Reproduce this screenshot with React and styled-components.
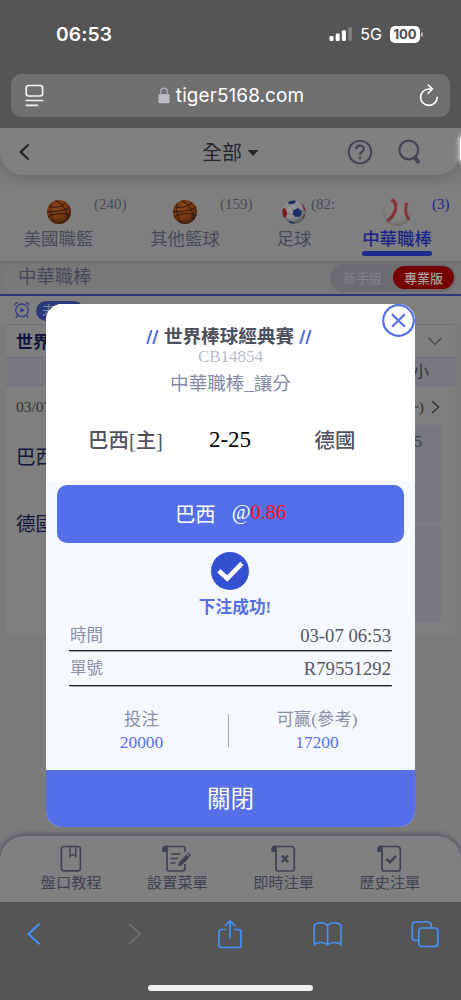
import React from "react";
import styled, { createGlobalStyle } from "styled-components";

const GlobalStyle = createGlobalStyle`
  * {
    box-sizing: border-box;
  }
  body {
    margin: 0;
    background: #555555;
    font-family: "Liberation Serif", "Noto Sans CJK TC", serif;
  }
`;

const Phone = styled.div`
  position: relative;
  width: 461px;
  height: 1000px;
  display: flex;
  flex-direction: column;
  overflow: hidden;
  background: #555555;
`;

/* ---------- browser top ---------- */

const StatusBar = styled.div`
  height: 74px;
  padding: 0 38px 6px 56px;
  display: flex;
  align-items: center;
  justify-content: space-between;
  color: #ffffff;
  font-family: Inter, sans-serif;
`;

const Clock = styled.div`
  font-size: 19.3px;
  font-weight: 600;
  letter-spacing: 0.1px;
`;

const StatusIcons = styled.div`
  display: flex;
  align-items: center;
  font-size: 16px;
`;

const Network = styled.span`
  margin: 0 8px 0 7px;
  font-size: 16px;
`;

const Battery = styled.div`
  width: 30px;
  height: 17px;
  border-radius: 5px;
  background: #ffffff;
  color: #4a4a4a;
  font-size: 13px;
  font-weight: 700;
  line-height: 17px;
  text-align: center;
`;

const BatteryTip = styled.div`
  width: 2px;
  height: 5px;
  margin-left: 1px;
  border-radius: 0 2px 2px 0;
  background: #b5b5b5;
`;

const AddressBar = styled.div`
  height: 43px;
  margin: 0 11px;
  padding: 0 11px 0 14px;
  display: flex;
  align-items: center;
  justify-content: space-between;
  border-radius: 10px;
  background: #707070;
  color: #ffffff;
  font-family: Inter, sans-serif;
  font-size: 18.9px;
`;

const Address = styled.div`
  display: flex;
  align-items: center;
  gap: 6px;
  padding-right: 1px;
  letter-spacing: 0.12px;
`;

/* ---------- page ---------- */

const Page = styled.div`
  position: relative;
  height: 774px;
  margin-top: 11px;
  display: flex;
  flex-direction: column;
  background: #7b7b7b;
  overflow: hidden;
`;

const Header = styled.div`
  height: 47px;
  padding: 0 40px 0 17px;
  display: grid;
  grid-template-columns: 100px 1fr 100px;
  align-items: center;
  border-radius: 0 0 24px 24px;
  background: #808080;
  box-shadow: 0 3px 8px rgba(60, 60, 60, 0.25);
`;

const HeaderTitle = styled.div`
  display: flex;
  align-items: center;
  justify-content: center;
  gap: 5px;
  padding: 2px 0 0 23px;
  color: #26272c;
  font-size: 20px;
  line-height: 24px;
`;

const HeaderTools = styled.div`
  display: flex;
  justify-content: flex-end;
  gap: 24px;
`;

const Glow = styled.div`
  position: absolute;
  top: 7px;
  right: -9px;
  width: 10px;
  height: 28px;
  border-radius: 5px;
  background: #ffffff;
  box-shadow: 0 0 5px 1px #d8d8d8;
`;

const Tabs = styled.div`
  height: 76px;
  margin-top: 10px;
  display: grid;
  grid-template-columns: 117px 136px 82px 124px;
  background: #7f7f7f;
`;

const Tab = styled.div`
  position: relative;
  display: flex;
  flex-direction: column;
  align-items: center;
  padding-top: 12px;
  color: ${(props) => (props.$active ? "#19258a" : "#474b58")};
  font-size: 17.4px;
  font-weight: ${(props) => (props.$active ? 500 : 400)};
`;

const Ball = styled.div`
  height: 30px;
  display: flex;
  align-items: center;
`;

const TabLabel = styled.div`
  height: 26px;
  line-height: 24px;
  white-space: nowrap;
`;

const Underline = styled.div`
  width: 70px;
  height: 5px;
  margin-top: -2px;
  border-radius: 3px;
  background: #1c2b8c;
`;

const Count = styled.div`
  position: absolute;
  top: 10px;
  left: ${(props) => props.$left}px;
  white-space: nowrap;
  font-size: 15px;
  line-height: 19px;
  font-weight: 400;
`;

const LeagueBar = styled.div`
  height: 35px;
  padding: 0 5px 0 18px;
  display: flex;
  align-items: center;
  justify-content: space-between;
  border-bottom: 2px solid #2c3777;
  background: #797979;
  box-shadow: inset 0 3px 4px -2px rgba(60, 60, 60, 0.3);
  color: #44485a;
  font-size: 18.4px;
  line-height: 24px;
`;

const LeagueName = styled.div`
  padding-bottom: 1px;
`;

const Switcher = styled.div`
  width: 126px;
  height: 28px;
  padding: 2px;
  display: flex;
  align-items: center;
  justify-content: space-between;
  border-radius: 14px;
  background: #6b6c6f;
`;

const SwitchItem = styled.div`
  width: 61px;
  height: 23px;
  padding-top: 2px;
  border-radius: 12px;
  background: ${(props) => (props.$on ? "#760000" : "transparent")};
  color: ${(props) => (props.$on ? "#a5a0a0" : "#838488")};
  font-size: 13px;
  font-weight: ${(props) => (props.$on ? 500 : 400)};
  line-height: 22px;
  text-align: center;
`;

const LiveRow = styled.div`
  height: 28px;
  padding: 5px 14px 3px;
  display: flex;
  gap: 6px;
  background: #7f7f7f;
`;

const LivePill = styled.div`
  width: 48px;
  height: 20px;
  padding-left: 6px;
  border-radius: 10px;
  background: #2b3877;
  color: #8288a3;
  font-size: 13px;
  line-height: 20px;
`;

const Board = styled.div`
  width: 449px;
  height: 310px;
  margin-left: 6px;
  background: #7f7f7f;
`;

const BoardTitle = styled.div`
  height: 34px;
  padding: 0 13px 0 10px;
  display: flex;
  align-items: center;
  justify-content: space-between;
  border-top: 1px solid #6f7080;
  border-bottom: 1px solid #6f7080;
  color: #10153d;
  font-size: 16.8px;
  font-weight: 700;
`;

const BoardBand = styled.div`
  height: 28px;
  padding: 0 26px;
  border-bottom: 1px solid #6f7080;
  background: #78797f;
  color: #2f3036;
  font-size: 16px;
  line-height: 28px;
  text-align: right;
`;

const BoardTime = styled.div`
  height: 39px;
  padding: 3px 15px 0 10px;
  display: flex;
  align-items: center;
  justify-content: space-between;
  color: #303036;
  font-size: 15.5px;
`;

const MoreLink = styled.div`
  display: flex;
  align-items: center;
  gap: 7px;
`;

const BoardBody = styled.div`
  display: flex;
  justify-content: space-between;
  padding: 0 14px 0 10px;
`;

const TeamNames = styled.div`
  display: flex;
  flex-direction: column;
  gap: 37px;
  padding-top: 18px;
  color: #10153d;
  font-size: 19.5px;
  line-height: 30px;
`;

const OddsColumn = styled.div`
  width: 60px;
  display: flex;
  flex-direction: column;
  gap: 3px;
`;

const OddsCell = styled.div`
  height: 97px;
  padding: 6px 19px;
  background: #78797f;
  color: #393a42;
  font-size: 16px;
  line-height: 22px;
  text-align: right;
`;

const BottomNav = styled.div`
  height: 66px;
  margin-top: auto;
  padding: 9px 18px 0;
  display: grid;
  grid-template-columns: repeat(4, 1fr);
  border-radius: 24px 24px 0 0;
  background: #808080;
  box-shadow: 0 -1px 5px 1px #565765;
`;

const NavItem = styled.div`
  display: flex;
  flex-direction: column;
  align-items: center;
  color: #3e4252;
  font-size: 15.2px;
  line-height: 20px;
`;

/* ---------- bet slip ---------- */

const Slip = styled.div`
  position: absolute;
  top: 304px;
  left: 46px;
  width: 369px;
  height: 523px;
  display: flex;
  flex-direction: column;
  border-radius: 16px;
  background: #f5f8ff;
  text-align: center;
  overflow: hidden;
`;

const SlipHead = styled.div`
  height: 177px;
  padding-top: 20px;
  background: #ffffff;
`;

const SlipTitle = styled.div`
  height: 26px;
  padding-right: 3px;
  display: flex;
  align-items: center;
  justify-content: center;
  gap: 5px;
  color: #4d505d;
  font-size: 18.6px;
  font-weight: 700;
  line-height: 26px;
`;

const SlipCode = styled.div`
  height: 18px;
  margin-top: -2px;
  color: #b9bcca;
  font-size: 17px;
  line-height: 18px;
`;

const SlipMarket = styled.div`
  height: 26px;
  margin-top: 5px;
  color: #858ba6;
  font-size: 18.6px;
  line-height: 26px;
`;

const Match = styled.div`
  height: 40px;
  margin-top: 22px;
  display: grid;
  grid-template-columns: 159px 50px 160px;
  align-items: center;
  color: #50535e;
  font-size: 20.4px;
  font-weight: 500;
`;

const Score = styled.div`
  padding-top: 2px;
  color: #000000;
  font-size: 23px;
  font-weight: 400;
`;

const Pick = styled.div`
  height: 58px;
  margin: 4px 11px 0;
  padding-bottom: 3px;
  display: flex;
  align-items: center;
  justify-content: center;
  gap: 16px;
  border-radius: 10px;
  background: #556fe8;
  color: #ffffff;
  font-size: 20.4px;
`;

const Odds = styled.span`
  color: #ff0d12;
`;

const Success = styled.div`
  height: 77px;
  padding: 9px 1px 0 0;
  display: flex;
  flex-direction: column;
  align-items: center;
  color: #556fe8;
  font-size: 16.7px;
  font-weight: 700;
`;

const SuccessText = styled.div`
  margin-top: 6px;
  padding-left: 10px;
  line-height: 24px;
`;

const Detail = styled.div`
  height: ${(props) => props.$height}px;
  margin: 0 23px;
  padding: 1px 1px 0 1px;
  display: flex;
  align-items: center;
  justify-content: space-between;
  border-bottom: 1px solid #232429;
  box-shadow: 0 1px 0 -0.5px #555555;
  color: #8a8fa5;
  font-size: 16.5px;
  line-height: 28px;
`;

const DetailValue = styled.span`
  padding-top: 1px;
  color: #555763;
  font-size: 18.7px;
`;

const Amounts = styled.div`
  height: 84px;
  display: grid;
  grid-template-columns: 173px 1px 1fr;
  padding: 20px 10px 0 9px;
`;

const Divider = styled.div`
  width: 1px;
  height: 33px;
  margin-top: 8px;
  background: #a4a8ce;
`;

const Amount = styled.div`
  color: #8a8fa5;
  font-size: 17.4px;
  line-height: 26px;
`;

const AmountValue = styled.div`
  color: #556fe8;
  line-height: 21px;
`;

const CloseButton = styled.button`
  height: 57px;
  margin-top: auto;
  padding: 0 0 3px;
  border: 0;
  background: #556fe8;
  color: #ffffff;
  font-family: inherit;
  font-size: 23.5px;
`;

const CloseIcon = styled.svg`
  position: absolute;
  top: 304px;
  left: 382px;
`;

/* ---------- browser bottom ---------- */

const SafariBar = styled.div`
  height: 64px;
  padding: 0 21px 0 19px;
  display: flex;
  align-items: center;
  justify-content: space-between;
`;

const HomeBar = styled.div`
  width: 165px;
  height: 6px;
  margin: 19px auto 0;
  border-radius: 3px;
  background: #f0f0f0;
`;

function Basketball() {
  return (
    <svg width="26" height="26" viewBox="0 0 26 26" fill="none">
      <defs>
        <radialGradient id="orange" cx="0.42" cy="0.35" r="0.65">
          <stop offset="0" stopColor="#8a451c" />
          <stop offset="0.65" stopColor="#743610" />
          <stop offset="1" stopColor="#42200e" />
        </radialGradient>
      </defs>
      <circle cx="13" cy="13" r="12" fill="url(#orange)" />
      <path
        d="M3.2 7.5C8 9.5 16 8 20 3.5M1 12.5C9 13 18 12 24 8M2 18C9 13.5 19 14 24.5 16.5M9.5 1.5C17 5 21.5 12 21.5 21"
        stroke="#24150e"
        strokeWidth="0.9"
      />
      <path d="M5 4.2C3.8 10 5.5 19 9 24.2" stroke="#2c180e" strokeWidth="0.7" />
    </svg>
  );
}

function SoccerBall() {
  return (
    <svg width="24" height="24" viewBox="0 0 24 24">
      <defs>
        <clipPath id="soccer">
          <circle cx="12" cy="12" r="11.5" />
        </clipPath>
        <radialGradient id="shell" cx="0.42" cy="0.38" r="0.62">
          <stop offset="0" stopColor="#9a9a9c" />
          <stop offset="0.6" stopColor="#8a8a8d" />
          <stop offset="1" stopColor="#545458" />
        </radialGradient>
      </defs>
      <g clipPath="url(#soccer)">
        <circle cx="12" cy="12" r="12" fill="url(#shell)" />
        <path d="M5.5 2.5L8 0H14L12.8 3.4L8 4.2Z" fill="#1a2f60" />
        <path d="M0 8L3.5 8.5L5.2 13.5L3.6 17.5L0 17Z" fill="#82151b" />
        <path d="M19.5 2.5L24 6L24 12L22 9.5Z" fill="#82151b" />
        <path d="M11 10.5L16 8L20 11.5L18.5 16.5L13.5 17L11 14.5Z" fill="#1a2f6a" />
        <path d="M7 21L11 22L13 24H7Z" fill="#1a2f60" />
        <path d="M20.5 19L22 15L24 15L22 21Z" fill="#82151b" />
        <path
          d="M8 4.2L4 8.5M12.8 3.4L16 8M5.2 13.5L11 14.5M13.5 17L11 22M18.5 16.5L20.5 19M3.6 17.5L7 21M20 11.5L22 9.5M8 4.2L11 10.5"
          stroke="#6a6a70"
          strokeWidth="0.6"
          fill="none"
        />
      </g>
    </svg>
  );
}

function Baseball() {
  return (
    <svg width="28" height="28" viewBox="0 0 28 28" fill="none">
      <defs>
        <radialGradient id="leather" cx="0.5" cy="0.42" r="0.58">
          <stop offset="0" stopColor="#8b8988" />
          <stop offset="0.75" stopColor="#807e7d" />
          <stop offset="1" stopColor="#6a6868" />
        </radialGradient>
      </defs>
      <circle cx="14" cy="14" r="14" fill="url(#leather)" />
      <path d="M8.5 2C16 4 13 17 4.5 23" stroke="#86444a" strokeWidth="2" />
      <path d="M8.5 2C16 4 13 17 4.5 23" stroke="#86292d" strokeWidth="3.8" strokeDasharray="1.3 0.6" />
      <path d="M24 5C21.8 10 22.5 17 26 22" stroke="#86444a" strokeWidth="1.6" />
      <path d="M24 5C21.8 10 22.5 17 26 22" stroke="#86292d" strokeWidth="3.2" strokeDasharray="1.3 0.6" />
    </svg>
  );
}

const scroll = "M5 5.5H1.5V3.5Q1.5 1.5 4 1.5H20Q23.3 1.5 23.3 4.5V23.5Q23.3 26 20.8 26H7.5Q5 26 5 23.5Z";

function NavIcon({ kind }) {
  return (
    <svg width="30" height="28" viewBox="0 0 30 28" fill="none" stroke="#3e4252" strokeWidth="1.7">
      {kind === "book" && (
        <>
          <rect x="5.4" y="1.5" width="19" height="24.3" rx="2.2" />
          <path d="M14 2V11.5L16.8 9.3L19.7 11.5V2" strokeWidth="1.4" />
        </>
      )}
      {kind === "edit" && (
        <>
          <path d="M23 7V3.5Q23 1.5 20.5 1.5H4Q1.5 1.5 1.5 3.5V6H5V23.5Q5 26 7.5 26H20Q23 26 23 23V19" />
          <path d="M1.2 6V3Q2 1.2 5 1.5V6Z" fill="#3e4252" />
          <path d="M9 9H18.5M8.5 13.5H16M8.5 18H13.5" />
          <path d="M16 21.5L17 17.3L24.5 9.5L27.5 12.3L19.8 20.2Z" fill="#3e4252" stroke="none" />
          <path d="M25.3 8.6L26.5 7.5L29.3 10.2L28.2 11.4Z" fill="#3e4252" stroke="none" />
        </>
      )}
      {(kind === "cross" || kind === "check") && (
        <g transform="translate(2 0)">
          <path d={scroll} />
          <path d="M1.2 6V3Q2 1.2 5 1.5V6Z" fill="#3e4252" />
          <path
            d={kind === "cross" ? "M10.8 10.5L17 17M17 10.5L10.8 17" : "M9.5 14L13 17.3L19 10.8"}
            strokeWidth="2.5"
          />
        </g>
      )}
    </svg>
  );
}

function SlashMarks() {
  return (
    <svg width="13" height="16" viewBox="0 0 13 16" stroke="#556fe8" strokeWidth="2.1">
      <path d="M1.2 15L5.5 1M7.3 15L11.6 1" />
    </svg>
  );
}

const tabs = [
  { label: "美國職籃", count: "(240)", left: 94, icon: <Basketball /> },
  { label: "其他籃球", count: "(159)", left: 103, icon: <Basketball /> },
  { label: "足球", count: "(82:", left: 58, icon: <SoccerBall /> },
  { label: "中華職棒", count: "(3)", left: 97, icon: <Baseball />, active: true },
];

const navItems = [
  { label: "盤口教程", kind: "book" },
  { label: "設置菜單", kind: "edit" },
  { label: "即時注單", kind: "cross" },
  { label: "歷史注單", kind: "check" },
];

function BrowserTop() {
  return (
    <>
      <StatusBar>
        <Clock>06:53</Clock>
        <StatusIcons>
          <svg width="24" height="16" viewBox="0 0 24 16" fill="#ffffff">
            <rect x="0.5" y="10" width="4" height="5" rx="1.2" />
            <rect x="6.7" y="7.5" width="4" height="7.5" rx="1.2" />
            <rect x="12.9" y="4.2" width="4" height="10.8" rx="1.2" />
            <rect x="19.1" y="1" width="4" height="14" rx="1.2" fill="#7b7b7b" />
          </svg>
          <Network>5G</Network>
          <Battery>100</Battery>
          <BatteryTip />
        </StatusIcons>
      </StatusBar>
      <AddressBar>
        <svg width="19" height="23" viewBox="0 0 19 23" fill="none" stroke="#f2f2f2" strokeWidth="1.7" strokeLinecap="round">
          <rect x="1.2" y="1.5" width="16.4" height="10.5" rx="2.4" />
          <path d="M1.2 16.5H17.6M1.2 21.3H12.5" />
        </svg>
        <Address>
          <svg width="12" height="17" viewBox="0 0 12 17" fill="none">
            <rect x="0.5" y="7" width="11" height="9.3" rx="1.6" fill="#bdbbc4" />
            <path d="M2.8 8V4.6C2.8 0.2 9.2 0.2 9.2 4.6V8" stroke="#a9a8ad" strokeWidth="1.5" />
          </svg>
          tiger5168.com
        </Address>
        <svg width="20" height="23" viewBox="0 0 20 23" fill="none" stroke="#ffffff" strokeWidth="1.6" strokeLinecap="round" strokeLinejoin="round">
          <path d="M13 5H10C5.2 5 1.6 8.8 1.6 13.2C1.6 17.8 5.3 21.4 9.9 21.4C14.6 21.4 18.2 17.8 18.2 13.2" />
          <path d="M9.2 1L13.4 5L9.2 9.2" />
        </svg>
      </AddressBar>
    </>
  );
}

function BetSlip() {
  return (
    <>
      <Slip>
        <SlipHead>
          <SlipTitle>
            <SlashMarks />
            世界棒球經典賽
            <SlashMarks />
          </SlipTitle>
          <SlipCode>CB14854</SlipCode>
          <SlipMarket>中華職棒_讓分</SlipMarket>
          <Match>
            <div>巴西[主]</div>
            <Score>2-25</Score>
            <div>德國</div>
          </Match>
        </SlipHead>
        <Pick>
          <span>巴西</span>
          <span>
            @<Odds>0.86</Odds>
          </span>
        </Pick>
        <Success>
          <svg width="38" height="38" viewBox="0 0 38 38">
            <circle cx="19" cy="19" r="19" fill="#354fd1" />
            <path d="M7.8 18.7L16.2 26.5L31 11.3" fill="none" stroke="#ffffff" strokeWidth="4.6" />
          </svg>
          <SuccessText>下注成功!</SuccessText>
        </Success>
        <Detail $height={31}>
          時間<DetailValue>03-07 06:53</DetailValue>
        </Detail>
        <Detail $height={35}>
          單號<DetailValue>R79551292</DetailValue>
        </Detail>
        <Amounts>
          <Amount>
            投注
            <AmountValue>20000</AmountValue>
          </Amount>
          <Divider />
          <Amount>
            可贏(參考)
            <AmountValue>17200</AmountValue>
          </Amount>
        </Amounts>
        <CloseButton>關閉</CloseButton>
      </Slip>
      <CloseIcon width="33" height="33" viewBox="0 0 33 33" fill="none" stroke="#556fe8">
        <circle cx="16.5" cy="16.5" r="15.3" fill="#ffffff" strokeWidth="2.2" />
        <path d="M10 10.2L22.8 22.8M22.8 10.2L10 22.8" strokeWidth="2.2" />
      </CloseIcon>
    </>
  );
}

function App() {
  return (
    <Phone>
      <GlobalStyle />
      <BrowserTop />
      <Page>
        <Header>
          <svg width="16" height="18" viewBox="0 0 16 18" fill="none" stroke="#26272c" strokeWidth="2.4">
            <path d="M11.5 1.5L3.8 9L11.5 16.5" />
          </svg>
          <HeaderTitle>
            全部
            <svg width="12" height="6" viewBox="0 0 12 6" fill="#26272c">
              <path d="M0.5 0H11.5L6 6Z" />
            </svg>
          </HeaderTitle>
          <HeaderTools>
            <svg width="26" height="26" viewBox="0 0 26 26" fill="none" stroke="#434754" strokeWidth="2">
              <circle cx="13" cy="13" r="11.3" />
              <path d="M9.2 10.3C9.2 5.3 16.8 5.4 16.8 10C16.8 12.7 13 12.8 13 15.8" strokeWidth="2.2" />
              <circle cx="13" cy="19" r="1.4" fill="#434754" stroke="none" />
            </svg>
            <svg width="24" height="26" viewBox="0 0 24 26" fill="none" stroke="#434754" strokeLinecap="round">
              <circle cx="11.8" cy="11" r="9.4" strokeWidth="2.2" />
              <path d="M18 18.3L21 22.6" strokeWidth="4" />
            </svg>
          </HeaderTools>
        </Header>
        <Glow />
        <Tabs>
          {tabs.map((tab) => (
            <Tab key={tab.label} $active={tab.active}>
              <Ball>{tab.icon}</Ball>
              <TabLabel>{tab.label}</TabLabel>
              {tab.active && <Underline />}
              <Count $left={tab.left}>{tab.count}</Count>
            </Tab>
          ))}
        </Tabs>
        <LeagueBar>
          <LeagueName>中華職棒</LeagueName>
          <Switcher>
            <SwitchItem>新手版</SwitchItem>
            <SwitchItem $on>專業版</SwitchItem>
          </Switcher>
        </LeagueBar>
        <LiveRow>
          <svg width="16" height="18" viewBox="0 0 16 18" fill="none" stroke="#2f3c80" strokeWidth="1.3">
            <circle cx="8" cy="9.3" r="6.3" />
            <path d="M1 4.5Q1 1.5 4 2M15 4.5Q15 1.5 12 2M3.5 14.5L2 16.8M12.5 14.5L14 16.8" />
            <path d="M6.3 6.8V11.8L10.8 9.3Z" fill="#2f3c80" stroke="none" />
          </svg>
          <LivePill>未</LivePill>
        </LiveRow>
        <Board>
          <BoardTitle>
            世界
            <svg width="14" height="9" viewBox="0 0 14 9" fill="none" stroke="#42454f" strokeWidth="1.2">
              <path d="M0.8 1L7 7.5L13.2 1" />
            </svg>
          </BoardTitle>
          <BoardBand>小</BoardBand>
          <BoardTime>
            03/07
            <MoreLink>
              ~)
              <svg width="9" height="14" viewBox="0 0 9 14" fill="none" stroke="#303036" strokeWidth="1.4">
                <path d="M1 1L7.6 7L1 13" />
              </svg>
            </MoreLink>
          </BoardTime>
          <BoardBody>
            <TeamNames>
              <div>巴西</div>
              <div>德國</div>
            </TeamNames>
            <OddsColumn>
              <OddsCell>5</OddsCell>
              <OddsCell />
            </OddsColumn>
          </BoardBody>
        </Board>
        <BottomNav>
          {navItems.map((item) => (
            <NavItem key={item.kind}>
              <NavIcon kind={item.kind} />
              {item.label}
            </NavItem>
          ))}
        </BottomNav>
      </Page>
      <SafariBar>
        <svg width="30" height="24" viewBox="0 0 30 24" fill="none" stroke="#4592fb" strokeWidth="2">
          <path d="M20.5 1.8L9.5 12L20.5 22.2" />
        </svg>
        <svg width="30" height="24" viewBox="0 0 30 24" fill="none" stroke="#6f6f6f" strokeWidth="1.8">
          <path d="M12 1.8L23 12L12 22.2" />
        </svg>
        <svg width="30" height="30" viewBox="-2 0 30 30" fill="none" stroke="#4592fb" strokeWidth="1.7">
          <path d="M9 10.5H4.5Q2 10.5 2 13V26Q2 28.5 4.5 28.5H21.5Q24 28.5 24 26V13Q24 10.5 21.5 10.5H17" />
          <path d="M13 20V2.2M8 7L13 2L18 7" />
        </svg>
        <svg width="30" height="26" viewBox="-0.6 0 30 26" fill="none" stroke="#4592fb" strokeWidth="1.6">
          <path d="M15 5C12.5 0.8 4.5 0.8 1.6 4.5V23.5C5 20.8 12 20.8 15 24C18 20.8 25 20.8 28.4 23.5V4.5C25.5 0.8 17.5 0.8 15 5ZM15 5V24" />
        </svg>
        <svg width="30" height="28" viewBox="-1 0 30 28" fill="none" stroke="#4592fb" strokeWidth="1.7">
          <rect x="7.8" y="8" width="19" height="18.5" rx="3" />
          <path d="M7.5 20.5H4.5Q1.3 20.5 1.3 17.5V5Q1.3 2 4.5 2H17Q20.3 2 20.3 5V7.5" />
        </svg>
      </SafariBar>
      <HomeBar />
      <BetSlip />
    </Phone>
  );
}

export default App;
